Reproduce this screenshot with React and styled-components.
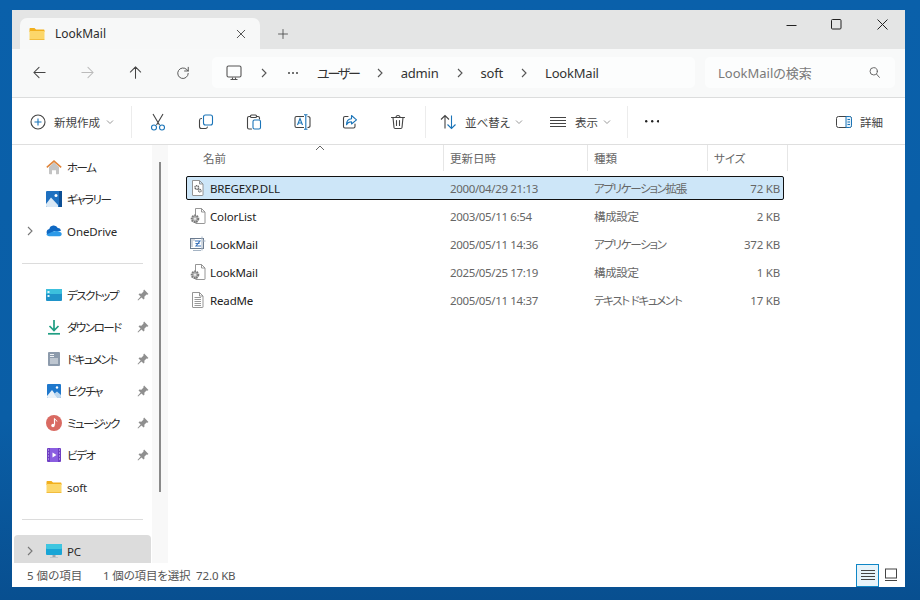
import React from 'react';
import styled, { createGlobalStyle } from 'styled-components';

const GlobalStyle = createGlobalStyle`
  html, body {
    margin: 0;
    height: 100%;
    background: #0a5fa8;
  }
  #root {
    height: 600px;
  }
  * {
    box-sizing: border-box;
  }
`;

const Desktop = styled.div`
  width: 920px;
  height: 600px;
  padding: 10px 15px 13px 12px;
  background: linear-gradient(180deg, #0a60aa 0%, #0a5ea6 70%, #084f90 100%);
  font-family: 'Noto Sans', 'Noto Sans CJK JP', sans-serif;
  font-feature-settings: 'palt';
  font-size: 12px;
  color: #222;
`;

const Window = styled.div`
  width: 893px;
  height: 577px;
  display: flex;
  flex-direction: column;
  background: #fff;
`;

const TitleBar = styled.div`
  height: 39px;
  flex: none;
  display: flex;
  align-items: flex-end;
  padding-left: 8px;
  background: #e4e5e5;
`;

const Tab = styled.div`
  width: 240px;
  height: 31px;
  display: flex;
  align-items: center;
  padding: 0 13px 0 9px;
  background: #f7f8f8;
  border-radius: 7px 7px 0 0;
`;

const TabTitle = styled.span`
  flex: 1;
  margin-left: 10px;
  font-size: 12px;
  color: #2c2c2c;
`;

const NewTab = styled.div`
  width: 46px;
  height: 31px;
  display: flex;
  align-items: center;
  justify-content: center;
`;

const WindowControls = styled.div`
  margin-left: auto;
  align-self: flex-start;
  display: flex;
`;

const WindowControl = styled.div`
  width: 45.5px;
  height: 29px;
  display: flex;
  align-items: center;
  justify-content: center;
`;

const AddressRow = styled.div`
  height: 49px;
  flex: none;
  display: flex;
  align-items: center;
  padding: 0 10px 1px 3px;
  background: #f8f9f9;
  border-bottom: 1px solid #dcdddd;
`;

const NavButton = styled.div`
  width: 48px;
  height: 32px;
  display: flex;
  align-items: center;
  justify-content: center;
`;

const AddressBox = styled.div`
  width: 483px;
  height: 31px;
  margin-left: 5px;
  padding-left: 14px;
  display: flex;
  align-items: center;
  background: #fcfdfd;
  border-radius: 5px;
  font-size: 13px;
  color: #333;
`;

const Crumb = styled.span`
  letter-spacing: ${(p) => (p.$kana ? '-2.2px' : '-0.2px')};
`;

const CrumbChevron = styled.span`
  display: flex;
  margin: ${(p) => p.$margin};
`;

const SearchBox = styled.div`
  width: 190px;
  height: 31px;
  margin-left: 10px;
  padding: 0 14px 0 13px;
  display: flex;
  align-items: center;
  justify-content: space-between;
  background: #fcfdfd;
  border-radius: 5px;
  font-size: 13px;
  color: #7a7a7a;
`;

const Toolbar = styled.div`
  height: 47px;
  flex: none;
  display: flex;
  align-items: center;
  padding: 1px 22px 0 18px;
  background: #fff;
  border-bottom: 1px solid #dfdfdf;
`;

const ToolSeparator = styled.div`
  width: 1px;
  height: 32px;
  flex: none;
  margin: ${(p) => p.$margin || '0'};
  background: #ececec;
`;

const LabelButton = styled.div`
  width: ${(p) => p.$width}px;
  padding-left: ${(p) => p.$pad || 0}px;
  display: flex;
  align-items: center;
  color: #444;
  flex: none;
`;

const ButtonLabel = styled.span`
  margin: 0 ${(p) => p.$after || 0}px 0 ${(p) => p.$before}px;
  font-size: 11.5px;
  white-space: nowrap;
`;

const IconButton = styled.div`
  width: 48px;
  display: flex;
  justify-content: center;
  flex: none;
`;

const DetailsButton = styled.div`
  margin-left: auto;
  display: flex;
  align-items: center;
  gap: 8px;
  font-size: 11.5px;
  color: #444;
`;

const Body = styled.div`
  flex: 1;
  min-height: 0;
  display: flex;
`;

const Sidebar = styled.nav`
  width: 140px;
  flex: none;
  padding: 6px 1px 0 2px;
  overflow: hidden;
  background: #fff;
`;

const NavRow = styled.div`
  height: 32px;
  flex: none;
  display: flex;
  align-items: center;
  position: relative;
  padding-left: 32px;
  border-radius: 4px;
  background: ${(p) => (p.$active ? '#dcdcdc' : 'transparent')};
  color: #2a2a2a;
  font-size: 11.5px;
`;

const NavLabel = styled.span`
  letter-spacing: ${(p) => (p.$kana ? '-1.5px' : '-0.1px')};
`;

const NavExpander = styled.span`
  position: absolute;
  left: 11px;
  top: 11px;
  display: flex;
`;

const NavIcon = styled.span`
  width: 16px;
  height: 16px;
  margin-right: 5px;
  flex: none;
  display: flex;
`;

const NavPin = styled.span`
  margin-left: auto;
  margin-right: 2px;
  display: flex;
`;

const NavDivider = styled.div`
  height: 32px;
  display: flex;
  align-items: center;
  padding: 0 8px;

  &::after {
    content: '';
    flex: 1;
    height: 1px;
    background: #dcdcdc;
  }
`;

const Gutter = styled.div`
  width: 16px;
  flex: none;
  padding-top: 17px;
  background: #f8f8f8;
`;

const ScrollThumb = styled.div`
  width: 2px;
  height: 330px;
  margin-left: 7px;
  background: #8a8a8a;
`;

const FileArea = styled.section`
  flex: 1;
  min-width: 0;
  padding-left: 18px;
  background: #fff;
`;

const HeaderRow = styled.div`
  height: 26px;
  position: relative;
  display: grid;
  grid-template-columns: 258px 144px 120px 80px;
  margin-bottom: 5px;
`;

const HeaderCell = styled.div`
  display: flex;
  align-items: center;
  padding-left: ${(p) => p.$pad || 6}px;
  border-right: 1px solid #e6e6e6;
  color: #666;
  font-size: 11.5px;
`;

const SortMark = styled.span`
  position: absolute;
  left: 129px;
  top: 0;
  display: flex;
`;

const FileList = styled.div`
  display: flex;
  flex-direction: column;
  gap: 4px;
`;

const FileRow = styled.div`
  width: 598px;
  height: 24px;
  display: grid;
  grid-template-columns: 257px 144px 120px 1fr;
  align-items: center;
  border-radius: 2px;
  background: ${(p) => (p.$selected ? '#cde6f8' : 'transparent')};
  outline: ${(p) => (p.$selected ? '1px solid #111' : 'none')};
  outline-offset: -1px;
`;

const NameCell = styled.div`
  display: flex;
  align-items: center;
  gap: 4px;
  padding-left: 4px;
  color: #222;
  font-size: 11.5px;
  letter-spacing: -0.15px;
`;

const MetaCell = styled.div`
  padding-left: 7px;
  color: #666;
  font-size: 11.5px;
  letter-spacing: ${(p) => (p.$kana ? '-1.3px' : '-0.35px')};
  white-space: nowrap;
`;

const SizeCell = styled.div`
  padding-right: 4px;
  text-align: right;
  color: #666;
  font-size: 11.5px;
  letter-spacing: -0.2px;
`;

const StatusBar = styled.div`
  height: 24px;
  flex: none;
  display: flex;
  align-items: center;
  padding: 0 3px 0 15px;
  background: #fff;
  color: #555;
  font-size: 11.5px;
`;

const StatusCount = styled.span`
  width: 76px;
`;

const StatusSelection = styled.span`
  letter-spacing: -0.15px;
`;

const ViewToggle = styled.div`
  width: 23px;
  height: 23px;
  display: flex;
  align-items: center;
  justify-content: center;
  border: 1px solid ${(p) => (p.$active ? '#0f86c6' : 'transparent')};
  background: ${(p) => (p.$active ? '#e6f3fa' : 'transparent')};
  margin-left: ${(p) => (p.$first ? 'auto' : '0')};
`;

const Line = ({ size = 16, color = '#444', width = 1.1, children }) => (
  <svg width={size} height={size} viewBox="0 0 16 16" fill="none" stroke={color} strokeWidth={width} strokeLinecap="round" strokeLinejoin="round">
    {children}
  </svg>
);

const Chevron = ({ color = '#555', size = 10 }) => (
  <svg width={size} height={size} viewBox="0 0 10 10" fill="none" stroke={color} strokeWidth="1.1">
    <path d="M3 1l4 4-4 4" />
  </svg>
);

const Caret = () => (
  <svg width="8" height="8" viewBox="0 0 8 8" fill="none" stroke="#999" strokeWidth="1">
    <path d="M1 2.5l3 3 3-3" />
  </svg>
);

const FolderIcon = ({ size = 16 }) => (
  <svg width={size} height={size} viewBox="0 0 16 16">
    <path d="M0.5 3c0-.6.4-1 1-1h4l1.5 1.5h7.5c.6 0 1 .4 1 1V6H.5z" fill="#f2b01e" />
    <path d="M.5 5h15v8c0 .6-.4 1-1 1h-13c-.6 0-1-.4-1-1z" fill="#fcd76a" />
    <path d="M.5 13h15c0 .6-.4 1-1 1h-13c-.6 0-1-.4-1-1z" fill="#f2bd3e" />
  </svg>
);

const MonitorIcon = () => (
  <svg width="16" height="16" viewBox="0 0 16 16" fill="none" stroke="#555" strokeWidth="1.1">
    <rect x="1" y="1" width="14" height="11" rx="1.5" />
    <path d="M4.500 14.500h7M6.500 12.500v2M9.500 12.500v2" />
  </svg>
);

const SearchIcon = () => (
  <Line size={13} color="#666" width={1.2}>
    <circle cx="7" cy="6.5" r="4.5" />
    <path d="M10.5 10l3.5 4" />
  </Line>
);

const BLUE = '#1a74b8';

const CutIcon = () => (
  <svg width="16" height="18" viewBox="0 0 16 18" fill="none" strokeWidth="1.1">
    <path d="M3 1l6.5 11M13 1L6.500 12" stroke="#444" />
    <circle cx="4" cy="14.500" r="2.500" stroke={BLUE} />
    <circle cx="12" cy="14.500" r="2.500" stroke={BLUE} />
  </svg>
);

const CopyIcon = () => (
  <Line size={16} color={BLUE}>
    <rect x="5.500" y="1" width="9" height="10" rx="2" />
    <path d="M3.500 4.500h-.3C2 4.500 1.500 5.300 1.500 6.500v6c0 1.200.8 2 2 2h4c1 0 1.700-.5 1.900-1.500" stroke="#444" />
  </Line>
);

const PasteIcon = () => (
  <Line size={16}>
    <path d="M4.500 2.500H3c-1 0-1.500.6-1.500 1.500v9.500c0 .9.500 1.500 1.500 1.500h2.500" />
    <path d="M10.500 2.500H12c1 0 1.500.6 1.500 1.500v1" />
    <rect x="4.500" y="1" width="6" height="2.500" rx="1" />
    <rect x="7" y="6" width="7.500" height="9" rx="1.500" stroke={BLUE} />
  </Line>
);

const RenameIcon = () => (
  <svg width="17" height="16" viewBox="0 0 17 16" fill="none" strokeWidth="1.1">
    <path d="M10 2.500H2.500c-1 0-1.500.5-1.500 1.500v8c0 1 .5 1.500 1.500 1.500H10M13.500 2.500c1.500 0 2.500.5 2.500 1.500v8c0 1-1 1.500-2.500 1.500" stroke="#444" />
    <path d="M3.500 11l2.500-6.500 2.500 6.500M4.300 9h3.400" stroke={BLUE} />
    <path d="M10 .8h3.500M11.800.8v14.400M10 15.200h3.500" stroke={BLUE} />
  </svg>
);

const ShareIcon = () => (
  <Line size={16}>
    <path d="M6 2.500H3c-1 0-1.500.6-1.500 1.500v8.500c0 1 .5 1.500 1.500 1.500h8.500c1 0 1.500-.5 1.500-1.500V10" />
    <path d="M9.500 1.500l5 4.300-5 4.200V7.700c-2.500 0-4 .8-5 3 0-3.500 1.500-5.700 5-6z" stroke={BLUE} />
  </Line>
);

const TrashIcon = () => (
  <Line size={16}>
    <path d="M1.500 3.500h13M6 3.500C6 2.300 6.800 1.500 8 1.500s2 .8 2 2M3 3.500l1 10c.1.800.6 1 1.200 1h5.600c.6 0 1.100-.2 1.200-1l1-10M6.500 6.500v5M9.500 6.500v5" />
  </Line>
);

const SortIcon = () => (
  <svg width="17" height="16" viewBox="0 0 17 16" fill="none" strokeWidth="1.1">
    <path d="M5 14.500V1.500M1 5.500l4-4 4 4" stroke="#444" />
    <path d="M11.500 1.500v13M7.500 10.500l4 4 4-4" stroke={BLUE} />
  </svg>
);

const ListIcon = () => (
  <svg width="16" height="12" viewBox="0 0 16 12" stroke="#444" strokeWidth="1">
    <path d="M0 1.500h16M0 4.500h16M0 7.500h16M0 10.500h16" />
  </svg>
);

const DetailsIcon = () => (
  <svg width="16" height="12" viewBox="0 0 16 12" fill="none" strokeWidth="1">
    <rect x=".5" y=".5" width="15" height="11" rx="2" stroke="#444" />
    <path d="M10 .5h3.500c1.200 0 2 .8 2 2v7c0 1.200-.8 2-2 2H10z" stroke={BLUE} fill="#e6f1f9" />
    <path d="M11.500 3.500h2.500M11.500 6h2.500M11.500 8.500h2.500" stroke={BLUE} />
  </svg>
);

const Dots = ({ gap = 5, r = 1, color = '#333' }) => (
  <svg width={gap * 2 + r * 2} height={r * 2} viewBox={`0 0 ${gap * 2 + r * 2} ${r * 2}`} fill={color}>
    <circle cx={r} cy={r} r={r} />
    <circle cx={r + gap} cy={r} r={r} />
    <circle cx={r + gap * 2} cy={r} r={r} />
  </svg>
);

const HomeIcon = () => (
  <svg width="16" height="16" viewBox="0 0 16 16">
    <path d="M3 8l5-4.500L13 8v6.500a.8.8 0 01-.8.8H10v-4H6v4H3.800a.8.8 0 01-.8-.8z" fill="#c4c4c4" />
    <path d="M8 1L.3 7.800l1 1.100L8 3.200l6.700 5.700 1-1.100z" fill="#e0853a" />
  </svg>
);

const GalleryIcon = () => (
  <svg width="16" height="16" viewBox="0 0 16 16">
    <rect width="16" height="16" rx="1" fill="#1e70c0" />
    <rect x="13" width="3" height="16" fill="#0d4f95" />
    <path d="M0 13l5-6.500L12 14v2H1a1 1 0 01-1-1z" fill="#dbe9f5" />
    <circle cx="10" cy="4.500" r="1.500" fill="#fff" />
  </svg>
);

const CloudIcon = () => (
  <svg width="16" height="16" viewBox="0 0 16 16">
    <path d="M4 13a3.500 3.500 0 01-.7-6.900A4.500 4.500 0 0111.800 5a3 3 0 013 3H8z" fill="#0f68c2" />
    <path d="M4 13.200c-1.500 0-3-.8-3.800-1.800L7 8.500c2-.8 5-1 8 1 1.200.8 1 3.700-1.500 3.700z" fill="#2d9ae8" />
  </svg>
);

const DesktopIcon = () => (
  <svg width="16" height="16" viewBox="0 0 16 16">
    <rect y="2" width="16" height="12" rx="1" fill="#1f93c9" />
    <rect y="2" width="16" height="5" rx="1" fill="#3cc0dd" />
    <rect x="1.500" y="4" width="2" height="2" fill="#e5f6fb" />
    <rect x="1.500" y="8" width="2" height="2" fill="#e5f6fb" />
  </svg>
);

const DownloadIcon = () => (
  <svg width="16" height="16" viewBox="0 0 16 16" fill="none" stroke="#1f9e83" strokeWidth="1.700">
    <path d="M8 1v10M3.500 7L8 11.500 12.500 7" />
    <path d="M2 14.800h12" />
  </svg>
);

const DocumentIcon = () => (
  <svg width="16" height="16" viewBox="0 0 16 16">
    <rect x="2" y="1" width="12" height="14" rx="1" fill="#8d9bac" />
    <path d="M4 3.500h4M4 5.500h4M4 8h8M4 10h8M4 12h8" stroke="#eef1f4" strokeWidth="1" />
  </svg>
);

const PictureIcon = () => (
  <svg width="16" height="16" viewBox="0 0 16 16">
    <rect x="1" y="1" width="14" height="14" rx="1" fill="#1f78cc" />
    <path d="M1 13l5-6 6 8H2a1 1 0 01-1-1z" fill="#e8f1f9" />
    <path d="M8 11l3-2.500 4 3.500v2a1 1 0 01-1 1h-2.500z" fill="#bcd7ef" />
    <circle cx="11" cy="4.500" r="1.200" fill="#fff" />
  </svg>
);

const MusicIcon = () => (
  <svg width="16" height="16" viewBox="0 0 16 16">
    <circle cx="8" cy="8" r="8" fill="#d96a62" />
    <path d="M8.500 3.500v6.300" stroke="#fff" strokeWidth="1.200" />
    <path d="M8.500 3.500c.5 1.500 2.500 1.500 2.500 3" stroke="#fff" strokeWidth="1" fill="none" />
    <circle cx="7" cy="10.500" r="1.700" fill="#fff" />
  </svg>
);

const VideoIcon = () => (
  <svg width="16" height="16" viewBox="0 0 16 16">
    <rect x="1" y="1" width="14" height="14" rx="1" fill="#6f3fc4" />
    <rect x="4" y="1" width="8" height="14" fill="#8a5de0" />
    <path d="M6.500 5.500l4 2.500-4 2.500z" fill="#fff" />
    <path d="M2 3h1M2 6h1M2 9h1M2 12h1M13 3h1M13 6h1M13 9h1M13 12h1" stroke="#d9c9f5" strokeWidth="1.200" />
  </svg>
);

const PcIcon = () => (
  <svg width="16" height="16" viewBox="0 0 16 16">
    <rect y="1" width="16" height="11" rx="1" fill="#18a5d6" />
    <rect y="1" width="16" height="5" rx="1" fill="#3ec6e0" />
    <rect x="6.500" y="12" width="3" height="2" fill="#9aa5ad" />
    <rect x="4" y="14" width="8" height="1" fill="#c0c6cb" />
  </svg>
);

const PinIcon = () => (
  <svg width="12" height="12" viewBox="0 0 11 11" fill="#8f8f8f">
    <path d="M6.500.5l4 4-1 .7-.8-.2-2 2 .2 1.800-.9.800-1.900-1.900L1 10.500l-.5-.5 2.800-3.100L1.400 5l.8-.9 1.800.2 2-2-.2-.8z" />
  </svg>
);

const SheetOutline = () => (
  <path d="M2.500.5h7l3.500 3.500v11a.5.5 0 01-.5.500H3a.5.500 0 01-.5-.5zM9.500.5v3.500H13" fill="#fff" stroke="#8a8a8a" strokeWidth=".9" />
);

const DllIcon = () => (
  <svg width="16" height="16" viewBox="0 0 16 16">
    <SheetOutline />
    <circle cx="6.800" cy="7.500" r="1.800" fill="none" stroke="#666" strokeWidth="1.500" strokeDasharray="1.200 .5" />
    <circle cx="9.800" cy="10.700" r="1.300" fill="none" stroke="#666" strokeWidth="1.200" strokeDasharray="1 .4" />
  </svg>
);

const ConfigIcon = () => (
  <svg width="16" height="16" viewBox="0 0 16 16">
    <path d="M5.500.5h6l3.500 3.500v11a.5.5 0 01-.5.500H6a.5.500 0 01-.5-.5zM11.500.5v3.500H15" fill="#fff" stroke="#8a8a8a" strokeWidth=".9" />
    <circle cx="5" cy="10.800" r="3.300" fill="#b4b4b4" stroke="#7a7a7a" strokeWidth="2" strokeDasharray="1.600 .8" />
    <circle cx="5" cy="10.800" r="1.100" fill="#eee" />
  </svg>
);

const AppIcon = () => (
  <svg width="16" height="16" viewBox="0 0 16 16">
    <rect x=".5" y="2.500" width="13" height="10" fill="#fff" stroke="#6c7c90" />
    <path d="M1 4h4M1 6h2M1 8h2M1 10h2" stroke="#8a98a8" strokeWidth=".8" />
    <path d="M5 5h5l-4 5h5M5.500 7.500h4" fill="none" stroke="#3c74bc" strokeWidth="1.100" />
    <path d="M12 .5v14M3 14.500h8M12.500 5h3" stroke="#a5b4c4" strokeWidth="1" />
  </svg>
);

const TextIcon = () => (
  <svg width="16" height="16" viewBox="0 0 16 16">
    <SheetOutline />
    <path d="M4.500 5.500h6.500M4.500 7.500h6.500M4.500 9.500h6.500M4.500 11.500h6.500M4.500 13.500h6.500" stroke="#8f8f8f" strokeWidth=".9" />
  </svg>
);

const PreviewIcon = () => (
  <svg width="14" height="14" viewBox="0 0 14 14" fill="none" stroke="#444" strokeWidth="1">
    <rect x="1.500" y="1" width="11" height="9" />
    <path d="M1 12.500h12" />
  </svg>
);

const navGroups = [
  [
    { label: 'ホーム', icon: HomeIcon, kana: true },
    { label: 'ギャラリー', icon: GalleryIcon, kana: true },
    { label: 'OneDrive', icon: CloudIcon, expand: true },
  ],
  [
    { label: 'デスクトップ', icon: DesktopIcon, pin: true, kana: true },
    { label: 'ダウンロード', icon: DownloadIcon, pin: true, kana: true },
    { label: 'ドキュメント', icon: DocumentIcon, pin: true, kana: true },
    { label: 'ピクチャ', icon: PictureIcon, pin: true, kana: true },
    { label: 'ミュージック', icon: MusicIcon, pin: true, kana: true },
    { label: 'ビデオ', icon: VideoIcon, pin: true, kana: true },
    { label: 'soft', icon: FolderIcon },
  ],
  [{ label: 'PC', icon: PcIcon, expand: true, active: true }],
];

const files = [
  { name: 'BREGEXP.DLL', icon: DllIcon, date: '2000/04/29 21:13', type: 'アプリケーション拡張', size: '72 KB', selected: true, kana: true },
  { name: 'ColorList', icon: ConfigIcon, date: '2003/05/11 6:54', type: '構成設定', size: '2 KB' },
  { name: 'LookMail', icon: AppIcon, date: '2005/05/11 14:36', type: 'アプリケーション', size: '372 KB', kana: true },
  { name: 'LookMail', icon: ConfigIcon, date: '2025/05/25 17:19', type: '構成設定', size: '1 KB' },
  { name: 'ReadMe', icon: TextIcon, date: '2005/05/11 14:37', type: 'テキスト ドキュメント', size: '17 KB', kana: true },
];

const crumbs = [{ label: 'ユーザー', kana: true }, { label: 'admin' }, { label: 'soft' }];

const toolIcons = [CutIcon, CopyIcon, PasteIcon, RenameIcon, ShareIcon, TrashIcon];

const App = () => (
  <Desktop>
    <GlobalStyle />
    <Window>
      <TitleBar>
        <Tab>
          <FolderIcon />
          <TabTitle>LookMail</TabTitle>
          <Line size={12} color="#333">
            <path d="M3 3l10 10M13 3L3 13" />
          </Line>
        </Tab>
        <NewTab>
          <Line size={12} color="#444">
            <path d="M8 2v12M2 8h12" />
          </Line>
        </NewTab>
        <WindowControls>
          <WindowControl>
            <svg width="11" height="11" viewBox="0 0 11 11" stroke="#222" strokeWidth="1">
              <path d="M.5 6.500h10" />
            </svg>
          </WindowControl>
          <WindowControl>
            <svg width="11" height="11" viewBox="0 0 11 11" fill="none" stroke="#222" strokeWidth="1">
              <rect x=".5" y=".5" width="9.500" height="9.500" rx="1" />
            </svg>
          </WindowControl>
          <WindowControl>
            <svg width="11" height="11" viewBox="0 0 11 11" stroke="#222" strokeWidth="1">
              <path d="M.5.500l10 10M10.500.500l-10 10" />
            </svg>
          </WindowControl>
        </WindowControls>
      </TitleBar>

      <AddressRow>
        <NavButton>
          <Line size={15} color="#444">
            <path d="M14 8H2M7.500 2.500L2 8l5.500 5.500" />
          </Line>
        </NavButton>
        <NavButton>
          <Line size={15} color="#bbb">
            <path d="M2 8h12M8.500 2.500L14 8l-5.500 5.500" />
          </Line>
        </NavButton>
        <NavButton>
          <Line size={15} color="#444">
            <path d="M8 14V2M2.500 7.500L8 2l5.500 5.500" />
          </Line>
        </NavButton>
        <NavButton>
          <Line size={14} color="#555">
            <path d="M14 8.500a6 6 0 11-1.700-4.400L14 5.700M14 1.500v4.200H9.800" />
          </Line>
        </NavButton>
        <AddressBox>
          <MonitorIcon />
          <CrumbChevron $margin="0 19px 0 17px">
            <Chevron />
          </CrumbChevron>
          <CrumbChevron $margin="0 19px 0 0">
            <Dots gap={4} r={1} color="#444" />
          </CrumbChevron>
          {crumbs.map((c) => (
            <React.Fragment key={c.label}>
              <Crumb $kana={c.kana}>{c.label}</Crumb>
              <CrumbChevron $margin="0 16px 0 16px">
                <Chevron />
              </CrumbChevron>
            </React.Fragment>
          ))}
          <Crumb>LookMail</Crumb>
        </AddressBox>
        <SearchBox>
          <span>LookMailの検索</span>
          <SearchIcon />
        </SearchBox>
      </AddressRow>

      <Toolbar>
        <LabelButton $width={101}>
          <svg width="16" height="16" viewBox="0 0 16 16" fill="none" strokeWidth="1.100" stroke="#444">
            <circle cx="8" cy="8" r="7" />
            <path d="M8 4.500v7M4.500 8h7" stroke={BLUE} />
          </svg>
          <ButtonLabel $before={8} $after={6}>新規作成</ButtonLabel>
          <Caret />
        </LabelButton>
        <ToolSeparator $margin="0 2px 0 0" />
        {toolIcons.map((Icon) => (
          <IconButton key={Icon.name}>
            <Icon />
          </IconButton>
        ))}
        <ToolSeparator $margin="0 0 0 3px" />
        <LabelButton $width={103} $pad={14}>
          <SortIcon />
          <ButtonLabel $before={8} $after={5}>並べ替え</ButtonLabel>
          <Caret />
        </LabelButton>
        <LabelButton $width={98} $pad={21}>
          <ListIcon />
          <ButtonLabel $before={9} $after={5}>表示</ButtonLabel>
          <Caret />
        </LabelButton>
        <ToolSeparator />
        <IconButton>
          <Dots gap={6} r={1.200} color="#222" />
        </IconButton>
        <DetailsButton>
          <DetailsIcon />
          <span>詳細</span>
        </DetailsButton>
      </Toolbar>

      <Body>
        <Sidebar>
          {navGroups.map((group, i) => (
            <React.Fragment key={group[0].label}>
              {i > 0 && <NavDivider />}
              {group.map((item) => (
                <NavRow key={item.label} $active={item.active}>
                  {item.expand && (
                    <NavExpander>
                      <Chevron color="#777" />
                    </NavExpander>
                  )}
                  <NavIcon>
                    <item.icon />
                  </NavIcon>
                  <NavLabel $kana={item.kana}>{item.label}</NavLabel>
                  {item.pin && (
                    <NavPin>
                      <PinIcon />
                    </NavPin>
                  )}
                </NavRow>
              ))}
            </React.Fragment>
          ))}
        </Sidebar>
        <Gutter>
          <ScrollThumb />
        </Gutter>
        <FileArea>
          <HeaderRow>
            <HeaderCell $pad={17}>名前</HeaderCell>
            <HeaderCell>更新日時</HeaderCell>
            <HeaderCell>種類</HeaderCell>
            <HeaderCell>サイズ</HeaderCell>
            <SortMark>
              <svg width="10" height="6" viewBox="0 0 10 6" fill="none" stroke="#666" strokeWidth="1">
                <path d="M1 5l4-4 4 4" />
              </svg>
            </SortMark>
          </HeaderRow>
          <FileList>
            {files.map((f) => (
              <FileRow key={f.date} $selected={f.selected}>
                <NameCell>
                  <f.icon />
                  <span>{f.name}</span>
                </NameCell>
                <MetaCell>{f.date}</MetaCell>
                <MetaCell $kana={f.kana}>{f.type}</MetaCell>
                <SizeCell>{f.size}</SizeCell>
              </FileRow>
            ))}
          </FileList>
        </FileArea>
      </Body>

      <StatusBar>
        <StatusCount>5 個の項目</StatusCount>
        <StatusSelection>1 個の項目を選択&nbsp;&nbsp;72.0 KB</StatusSelection>
        <ViewToggle $active $first>
          <svg width="14" height="12" viewBox="0 0 14 12" stroke="#444" strokeWidth="1">
            <path d="M0 1.500h14M0 4.500h14M0 7.500h14M0 10.500h14" />
          </svg>
        </ViewToggle>
        <ViewToggle>
          <PreviewIcon />
        </ViewToggle>
      </StatusBar>
    </Window>
  </Desktop>
);

export default App;
